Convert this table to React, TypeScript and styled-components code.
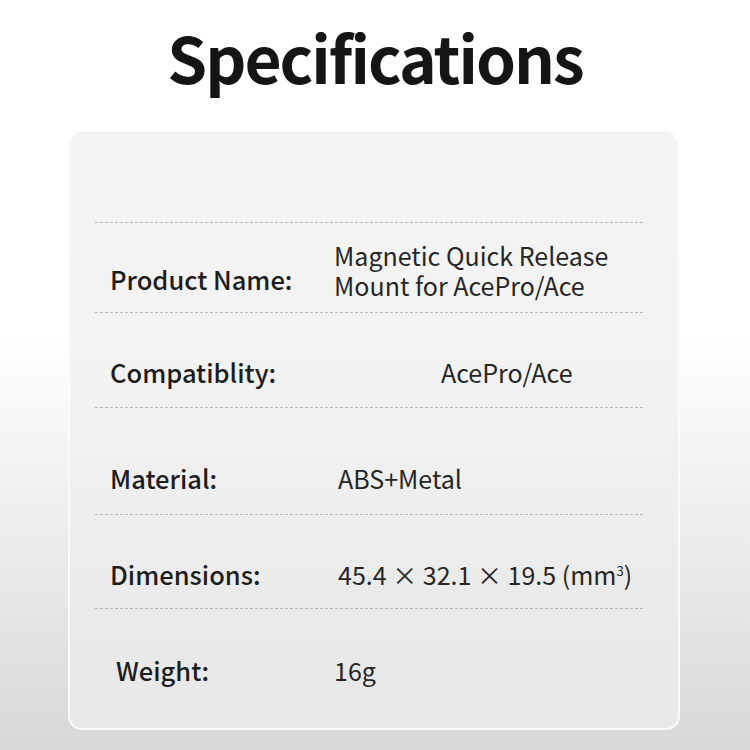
import React from "react";
import styled, { createGlobalStyle } from "styled-components";

const Global = createGlobalStyle`
  html, body { margin: 0; padding: 0; }
  body {
    width: 750px;
    height: 750px;
    overflow: hidden;
    font-family: "Noto Sans CJK SC", "Noto Sans", sans-serif;
    background: linear-gradient(180deg, #ffffff 0%, #ffffff 44%, #e6e6e6 80%, #d7d7d8 100%);
  }
`;

const Page = styled.div`
  width: 750px;
  height: 750px;
  display: flex;
  flex-direction: column;
  align-items: center;
`;

const Title = styled.h1`
  margin: 0;
  padding-top: 24px;
  font-size: 64px;
  line-height: 64px;
  font-weight: 700;
  color: #151515;
  letter-spacing: -2px;
`;

const Card = styled.div`
  margin-top: 44px;
  margin-left: -2px;
  width: 612px;
  height: 598px;
  box-sizing: border-box;
  border-radius: 14px;
  background: linear-gradient(180deg, #f4f4f4 0%, #f2f2f2 45%, #eaeaea 80%, #e7e7e7 100%);
  border: 2px solid rgba(255, 255, 255, 0.75);
  border-top-color: rgba(255, 255, 255, 0.3);
  padding: 88px 35px 0 25px;
  display: flex;
  flex-direction: column;
`;

const Row = styled.div<{ $h: number; $shift: number }>`
  height: ${(p) => p.$h}px;
  box-sizing: border-box;
  border-top: 1px dashed #b9b9b9;
  display: grid;
  grid-template-columns: 239px 1fr;
  align-items: center;
  padding-top: ${(p) => p.$shift * 2}px;
`;

const Label = styled.div<{ $indent?: number }>`
  padding-left: ${(p) => 15 + (p.$indent ?? 0)}px;
  font-size: 25.5px;
  line-height: 30px;
  font-weight: 500;
  color: #1d1d1d;
`;

const Value = styled.div<{ $indent?: number; $dy?: number }>`
  padding-left: ${(p) => p.$indent ?? 0}px;
  margin-top: ${(p) => (p.$dy ?? 0) * 2}px;
  font-size: 25px;
  line-height: 30px;
  font-weight: 400;
  color: #262626;
  white-space: nowrap;
`;

const Sup = styled.sup`
  font-size: 13px;
  vertical-align: 9px;
  line-height: 0;
`;

export default function App() {
  return (
    <>
      <Global />
      <Page>
        <Title>Specifications</Title>
        <Card>
          <Row $h={90} $shift={11}>
            <Label>Product Name:</Label>
            <Value $dy={-9}>
              Magnetic Quick Release
              <br />
              Mount for AcePro/Ace
            </Value>
          </Row>
          <Row $h={95} $shift={12}>
            <Label>Compatiblity:</Label>
            <Value $indent={107}>AcePro/Ace</Value>
          </Row>
          <Row $h={107} $shift={17}>
            <Label>Material:</Label>
            <Value $indent={4}>ABS+Metal</Value>
          </Row>
          <Row $h={94} $shift={12}>
            <Label>Dimensions:</Label>
            <Value $indent={4}>
              45.4 × 32.1 × 19.5 (mm<Sup>3</Sup>)
            </Value>
          </Row>
          <Row $h={120} $shift={1}>
            <Label $indent={6}>Weight:</Label>
            <Value>16g</Value>
          </Row>
        </Card>
      </Page>
    </>
  );
}
